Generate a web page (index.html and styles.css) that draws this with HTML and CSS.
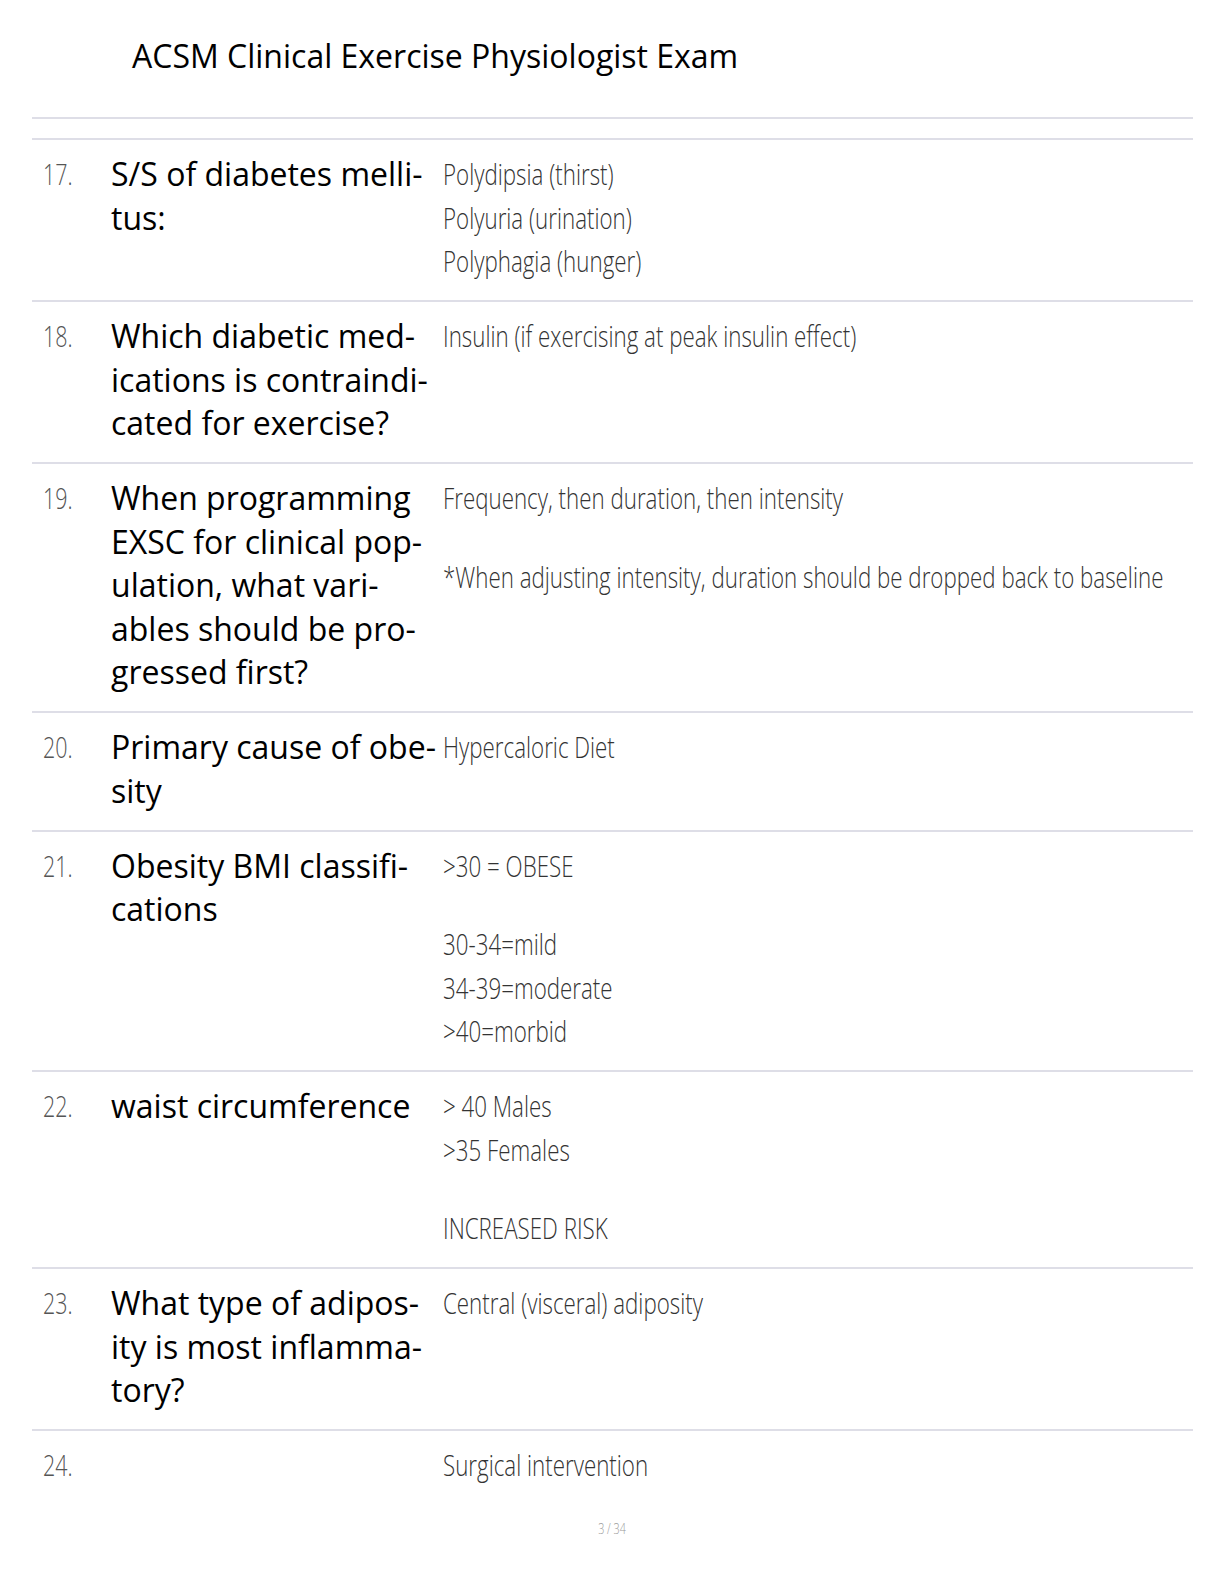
FILE: index.html
```html
<!DOCTYPE html>
<html lang="en">
<head>
<meta charset="utf-8">
<title>ACSM Clinical Exercise Physiologist Exam</title>
<link rel="stylesheet" href="styles.css">
</head>
<body>
<div class="page">
  <header class="title">ACSM Clinical Exercise Physiologist Exam</header>
  <div class="rule"></div>
  <main class="cards">
    <div class="row">
      <div class="num"><span class="cond">17.</span></div>
      <div class="q">S/S of diabetes melli-<br>tus:</div>
      <div class="a">
        <div class="ln"><span class="cond">Polydipsia (thirst)</span></div>
        <div class="ln"><span class="cond">Polyuria (urination)</span></div>
        <div class="ln"><span class="cond">Polyphagia (hunger)</span></div>
      </div>
    </div>
    <div class="row">
      <div class="num"><span class="cond">18.</span></div>
      <div class="q">Which diabetic med-<br>ications is contraindi-<br>cated for exercise?</div>
      <div class="a">
        <div class="ln"><span class="cond">Insulin (if exercising at peak insulin effect)</span></div>
      </div>
    </div>
    <div class="row">
      <div class="num"><span class="cond">19.</span></div>
      <div class="q">When programming<br>EXSC for clinical pop-<br>ulation, what vari-<br>ables should be pro-<br>gressed first?</div>
      <div class="a">
        <div class="ln"><span class="cond">Frequency, then duration, then intensity</span></div>
        <div class="blank"></div>
        <div class="ln"><span class="cond">*When adjusting intensity, duration should be dropped back to baseline</span></div>
      </div>
    </div>
    <div class="row">
      <div class="num"><span class="cond">20.</span></div>
      <div class="q">Primary cause of obe-<br>sity</div>
      <div class="a">
        <div class="ln"><span class="cond">Hypercaloric Diet</span></div>
      </div>
    </div>
    <div class="row">
      <div class="num"><span class="cond">21.</span></div>
      <div class="q">Obesity BMI classifi-<br>cations</div>
      <div class="a">
        <div class="ln"><span class="cond">&gt;30 = OBESE</span></div>
        <div class="blank"></div>
        <div class="ln"><span class="cond">30-34=mild</span></div>
        <div class="ln"><span class="cond">34-39=moderate</span></div>
        <div class="ln"><span class="cond">&gt;40=morbid</span></div>
      </div>
    </div>
    <div class="row">
      <div class="num"><span class="cond">22.</span></div>
      <div class="q">waist circumference</div>
      <div class="a">
        <div class="ln"><span class="cond">&gt; 40 Males</span></div>
        <div class="ln"><span class="cond">&gt;35 Females</span></div>
        <div class="blank"></div>
        <div class="ln"><span class="cond">INCREASED RISK</span></div>
      </div>
    </div>
    <div class="row">
      <div class="num"><span class="cond">23.</span></div>
      <div class="q">What type of adipos-<br>ity is most inflamma-<br>tory?</div>
      <div class="a">
        <div class="ln"><span class="cond">Central (visceral) adiposity</span></div>
      </div>
    </div>
    <div class="row last">
      <div class="num"><span class="cond">24.</span></div>
      <div class="q"></div>
      <div class="a">
        <div class="ln"><span class="cond">Surgical intervention</span></div>
      </div>
    </div>
  </main>
  <footer class="pageno"><span class="cond">3 / 34</span></footer>
</div>
</body>
</html>
```
FILE: styles.css
```css
html, body {
  margin: 0;
  padding: 0;
  background: #ffffff;
}

body {
  font-family: "Open Sans", "DejaVu Sans", sans-serif;
  color: #000;
}

.page {
  width: 1224px;
  height: 1584px;
  padding: 36px 31px 0 32px;
  box-sizing: border-box;
  overflow: hidden;
}

.title {
  margin-left: 100px;
  font-size: 32px;
  line-height: 40px;
  font-weight: 400;
  color: #000;
}

.rule {
  margin-top: 41px;
  height: 2px;
  background: #dedee7;
}

.cards {
  margin-top: 19px;
}

.row {
  display: grid;
  grid-template-columns: 79px 332px 1fr;
  border-top: 2px solid #dedee7;
  padding: 12px 0 17.5px;
}

.num {
  padding-left: 11px;
  font-size: 29px;
  line-height: 43.5px;
  font-weight: 300;
  color: #555;
  white-space: nowrap;
}

.q {
  font-size: 32px;
  line-height: 43.5px;
  font-weight: 400;
  color: #000;
  white-space: nowrap;
}

.a {
  font-size: 29px;
  line-height: 43.5px;
  font-weight: 300;
  color: #333;
}

.ln {
  white-space: nowrap;
}

.blank {
  height: 35px;
}

.cond {
  display: inline-block;
  transform: scaleX(0.77);
  transform-origin: left center;
  white-space: nowrap;
}

.num .cond {
  transform: scaleX(0.74);
}

.pageno {
  margin-top: 15px;
  margin-left: -32px;
  width: 1224px;
  text-align: center;
  font-size: 14px;
  line-height: 20px;
  font-weight: 300;
  color: #999;
}

.pageno .cond {
  transform-origin: center center;
}
```
